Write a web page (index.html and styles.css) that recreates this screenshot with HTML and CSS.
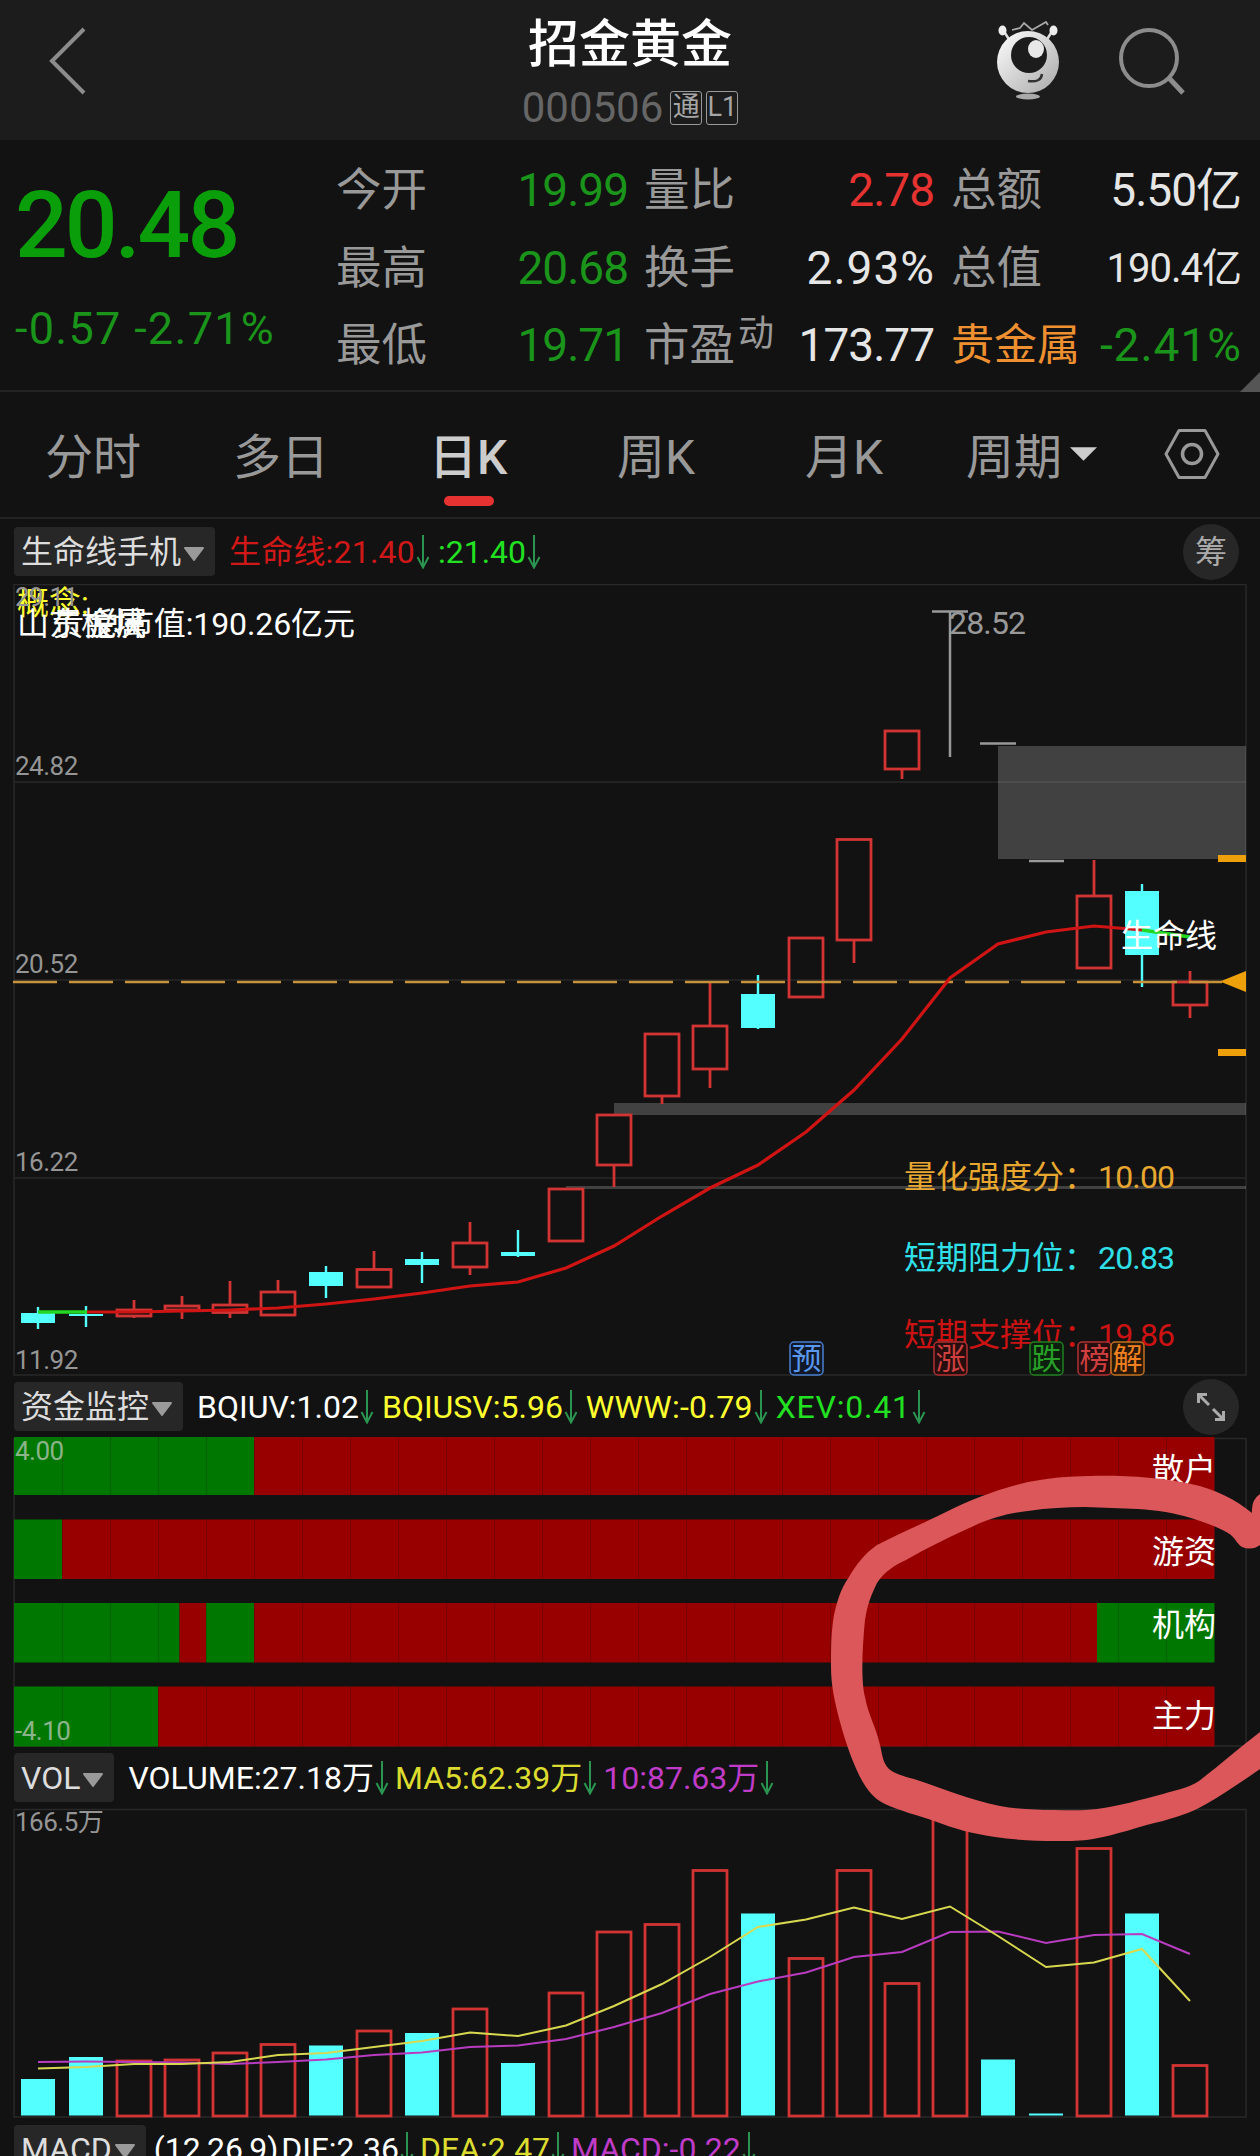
FILE: index.html
```html
<!DOCTYPE html>
<html lang="zh-CN">
<head>
    <meta charset="UTF-8">
    <title>招金黄金 000506</title>
    <link rel="stylesheet" href="styles.css">
</head>
<body>
<svg class="defs">
    <symbol id="down" viewBox="0 0 14 34">
        <path d="M7 0V32M1.500 22L7 32.500L12.500 22" fill="none" stroke="#2a9450" stroke-width="2"/>
    </symbol>
    <symbol id="tri" viewBox="0 0 22 14">
        <path d="M2 1H20L11 13Z" fill="#9a9a9a" stroke="#9a9a9a" stroke-width="2" stroke-linejoin="round"/>
    </symbol>
</svg>
<div id="container">
    <div class="header">
        <svg class="back" viewBox="0 0 40 70"><path d="M36 3L4 35L36 67" fill="none" stroke="#8c8c8c" stroke-width="4"/></svg>
        <div class="title">
            <h1>招金黄金</h1>
            <div class="code"><span>000506</span><i>通</i><i>L1</i></div>
        </div>
        <svg class="robot" viewBox="0 0 64 80">
            <defs>
                <linearGradient id="ball" x1="0" y1="0" x2="1" y2="1">
                    <stop offset="0" stop-color="#fff"/>
                    <stop offset="1" stop-color="#a8a8a8"/>
                </linearGradient>
            </defs>
            <path d="M9 12L14 20M55 12L50 20" stroke="#ddd" stroke-width="2.500"/>
            <path d="M16 9L24 7L28 2L36 9L50 1L52 4" fill="none" stroke="#aaa" stroke-width="1.800"/>
            <ellipse cx="6.500" cy="9.500" rx="4" ry="5" fill="#eee"/>
            <ellipse cx="57.500" cy="9.500" rx="4" ry="5" fill="#eee"/>
            <circle cx="32" cy="41" r="31" fill="url(#ball)"/>
            <circle cx="33" cy="34" r="18" fill="#1c1c1c"/>
            <ellipse cx="40" cy="28" rx="8" ry="9" fill="#e8e8e8"/>
            <path d="M32 60Q45 62 46 53" fill="none" stroke="#333" stroke-width="2.500"/>
            <ellipse cx="32" cy="75.500" rx="12" ry="3" fill="#aaa"/>
        </svg>
        <svg class="search" viewBox="0 0 68 68"><circle cx="30" cy="30" r="28" fill="none" stroke="#8c8c8c" stroke-width="4"/><path d="M50 50L64 65" stroke="#8c8c8c" stroke-width="5"/></svg>
    </div>

    <div class="quote">
        <div class="price">
            <div class="now">20.48</div>
            <div class="change">-0.57 -2.71%</div>
        </div>
        <ul class="col col-1">
            <li><span>今开</span><b class="green">19.99</b></li>
            <li><span>最高</span><b class="green">20.68</b></li>
            <li><span>最低</span><b class="green">19.71</b></li>
        </ul>
        <ul class="col col-2">
            <li><span>量比</span><b class="red">2.78</b></li>
            <li><span>换手</span><b class="wide">2.93%</b></li>
            <li><span>市盈<sup>动</sup></span><b>173.77</b></li>
        </ul>
        <ul class="col col-3">
            <li><span>总额</span><b>5.50亿</b></li>
            <li><span>总值</span><b class="small">190.4亿</b></li>
            <li><span class="orange">贵金属</span><b class="green wide">-2.41%</b></li>
        </ul>
        <div class="corner"></div>
    </div>

    <div class="tabs">
        <span>分时</span>
        <span class="day">多日</span>
        <span class="active">日K</span>
        <span>周K</span>
        <span class="month">月K</span>
        <span>周期<svg class="more" viewBox="0 0 28 14"><path d="M0 0H28L14 14Z" fill="#ccc"/></svg></span>
        <svg class="setting" viewBox="0 0 56 52"><path d="M15 2.500H41L54 26L41 49.500H15L2 26Z" fill="none" stroke="#999" stroke-width="3" stroke-linejoin="round"/><circle cx="28" cy="26" r="9.500" fill="none" stroke="#999" stroke-width="3.500"/></svg>
    </div>

    <div class="bar bar-main">
        <div class="chip">生命线手机<svg><use href="#tri"/></svg></div>
        <div class="item c-red">生命线:21.40<svg><use href="#down"/></svg></div>
        <div class="item c-green">:21.40<svg><use href="#down"/></svg></div>
        <div class="round">筹</div>
    </div>
    <svg class="chart" id="kline" width="1260" height="792" viewBox="0 584 1260 792">
        <path class="frame" d="M14 584.500H1246V1375H14ZM14 782H1246M14 980H1246M14 1178H1246"/>
        <g class="label">
            <text x="17" y="614" fill="#ffff30">概念:</text>
            <text x="17" y="635">山东板块</text>
            <text x="52" y="635">贵金属</text>
            <text x="90" y="635" textLength="265">总市值:190.26亿元</text>
        </g>
        <g class="axis">
            <text x="15" y="606">29.11</text>
            <text x="15" y="775">24.82</text>
            <text x="15" y="973">20.52</text>
            <text x="15" y="1171">16.22</text>
            <text x="15" y="1369">11.92</text>
        </g>
        <!-- 缺口 -->
        <g fill="#fff" fill-opacity="0.2">
            <rect x="998" y="746" width="248" height="113"/>
            <rect x="614" y="1103" width="632" height="12"/>
            <rect x="566" y="1186" width="680" height="3"/>
        </g>
        <g id="candles"></g>
        <g stroke="#999" stroke-width="2.500">
            <path d="M932 611.500H968M950 611V757M980 743.500H1016M1029 861H1064"/>
        </g>
        <text x="949" y="634" textLength="77" class="high">28.52</text>
        <path d="M13 982H1222" stroke="#c8923a" stroke-width="2.500" stroke-dasharray="44 12"/>
        <path d="M1220 981.500L1246 971V992ZM1218 855H1246V862H1218ZM1218 1049H1246V1056H1218Z" fill="#eea00a"/>
        <polyline id="life" fill="none" stroke="#d01414" stroke-width="3.200"/>
        <path d="M38 1312H87M1142 930L1190 937" fill="none" stroke="#22d822" stroke-width="3.500"/>
        <g class="label">
            <text x="1121" y="947">生命线</text>
            <g fill="#e8a830"><text x="904" y="1188">量化强度分：</text><text x="1098" y="1188" textLength="77">10.00</text></g>
            <g fill="#30e0e8"><text x="904" y="1269">短期阻力位：</text><text x="1098" y="1269" textLength="77">20.83</text></g>
            <g fill="#cc1212"><text x="904" y="1346">短期支撑位：</text><text x="1098" y="1346" textLength="77">19.86</text></g>
        </g>
        <g class="mark">
            <g class="blue"><rect x="790" y="1342" width="33" height="33" rx="4"/><text x="791.500" y="1369">预</text></g>
            <g class="rise"><rect x="934" y="1342" width="33" height="33" rx="4"/><text x="935.500" y="1369">涨</text></g>
            <g class="fall"><rect x="1030" y="1342" width="33" height="33" rx="4"/><text x="1031.500" y="1369">跌</text></g>
            <g class="rise"><rect x="1078" y="1342" width="33" height="33" rx="4"/><text x="1079.500" y="1369">榜</text></g>
            <g class="unlock"><rect x="1111" y="1342" width="33" height="33" rx="4"/><text x="1112.500" y="1369">解</text></g>
        </g>
    </svg>

    <div class="bar">
        <div class="chip">资金监控<svg><use href="#tri"/></svg></div>
        <div class="item">BQIUV:1.02<svg><use href="#down"/></svg></div>
        <div class="item c-yellow">BQIUSV:5.96<svg><use href="#down"/></svg></div>
        <div class="item c-yellow www">WWW:-0.79<svg><use href="#down"/></svg></div>
        <div class="item c-green xev">XEV:0.41<svg><use href="#down"/></svg></div>
        <div class="round"><svg viewBox="0 0 28 28"><path d="M1.500 10V1.500H10M2 2L12 12M26.500 18V26.500H18M26 26L16 16" fill="none" stroke="#aaa" stroke-width="3"/></svg></div>
    </div>
    <svg class="chart" width="1260" height="310" viewBox="0 1437 1260 310">
        <path class="frame" d="M14 1438.500H1246V1746H14Z"/>
        <g id="funds"></g>
        <g class="axis light">
            <text x="15" y="1460">4.00</text>
            <text x="15" y="1740">-4.10</text>
        </g>
        <g class="label">
            <text x="1152" y="1481">散户</text>
            <text x="1152" y="1563">游资</text>
            <text x="1152" y="1636">机构</text>
            <text x="1152" y="1727">主力</text>
        </g>
    </svg>

    <div class="bar bar-vol">
        <div class="chip">VOL<svg><use href="#tri"/></svg></div>
        <div class="item">VOLUME:27.18万<svg><use href="#down"/></svg></div>
        <div class="item c-ma5">MA5:62.39万<svg><use href="#down"/></svg></div>
        <div class="item c-ma10">10:87.63万<svg><use href="#down"/></svg></div>
    </div>
    <svg class="chart" width="1260" height="310" viewBox="0 1808 1260 310">
        <path class="frame" d="M14 1809.500H1246V2117H14Z"/>
        <g class="axis"><text x="15" y="1831">166.5万</text></g>
        <g id="volumes"></g>
        <polyline id="ma10" fill="none" stroke="#b83cc0" stroke-width="2"/>
        <polyline id="ma5" fill="none" stroke="#d8d850" stroke-width="2"/>
    </svg>

    <div class="bar bar-macd">
        <div class="chip">MACD<svg><use href="#tri"/></svg></div>
        <div class="item">(12,26,9)<em>DIF:2.36</em><svg><use href="#down"/></svg></div>
        <div class="item c-ma5">DEA:2.47<svg><use href="#down"/></svg></div>
        <div class="item c-ma10">MACD:-0.22<svg><use href="#down"/></svg></div>
    </div>

    <!-- 手绘圈 -->
    <svg class="circle" viewBox="820 1470 440 380">
        <path fill="#db5759" d="M1260 1494Q1251 1500 1252 1513C1235 1499 1215 1489 1191 1484C1160 1477 1120 1475 1089 1476C1068 1476 1048 1478 1028 1482C998 1489 972 1499 946 1512C920 1525 898 1534 877 1545C864 1554 856 1565 849 1577C840 1590 837 1602 834 1615C831 1632 831 1650 831 1667C831 1686 835 1703 840 1722C846 1744 852 1760 859 1775C866 1789 874 1799 885 1804C900 1811 917 1815 934 1821C955 1829 974 1834 995 1837C1015 1840 1036 1841 1057 1841C1072 1841 1080 1841 1093 1839C1117 1835 1140 1826 1163 1821C1180 1816 1195 1811 1208 1803C1225 1793 1243 1781 1260 1769V1732C1238 1749 1220 1765 1199 1781C1188 1788 1176 1790 1163 1794C1140 1800 1119 1806 1097 1809C1082 1811 1068 1810 1053 1810C1035 1810 1017 1809 1000 1806C970 1800 942 1788 914 1779C903 1776 895 1774 889 1769C882 1762 882 1752 880 1745C876 1727 868 1714 865 1697C861 1682 862 1650 865 1620C867 1606 871 1595 877 1583C885 1571 895 1565 906 1560C927 1548 947 1538 967 1529C990 1518 1009 1513 1028 1511C1048 1508 1066 1507 1085 1507C1103 1508 1121 1508 1138 1509C1157 1510 1175 1513 1191 1518C1206 1523 1218 1527 1228 1533C1236 1538 1236 1543 1242 1547Q1252 1551 1260 1545Z"/>
    </svg>
</div>
<script src="script.js"></script>
</body>
</html>
```

FILE: styles.css
```css
*{
    margin: 0;
    padding: 0;
    box-sizing: border-box;
}
body{
    background-color: #121212;
    font-family: Roboto, "Noto Sans CJK SC", sans-serif;
    color: #fff;
}
ul{
    list-style: none;
}
i, em{
    font-style: normal;
}
svg{
    display: block;
    flex: none;
}
.defs{
    width: 0;
    height: 0;
    position: absolute;
}
#container{
    position: relative;
    width: 1260px;
    height: 2156px;
    overflow: hidden;
}
/* 顶部 */
.header{
    display: flex;
    height: 140px;
    background-color: #1c1c1c;
}
.back{
    width: 40px;
    height: 70px;
    margin: 26px 0 0 48px;
}
.title{
    width: 300px;
    margin-left: 392px;
    text-align: center;
}
.title h1{
    height: 85px;
    padding-top: 4px;
    line-height: 82px;
    font-size: 51px;
    font-weight: 500;
}
.code{
    display: flex;
    justify-content: center;
    align-items: center;
    height: 46px;
    color: #666;
    font-size: 42px;
    line-height: 46px;
}
.code span{
    margin-right: 7px;
}
.code i{
    width: 32px;
    height: 34px;
    margin-right: 4px;
    border: 1px solid #999;
    border-radius: 3px;
    color: #a5a5a5;
    font-size: 27px;
    line-height: 31px;
    text-align: center;
}
.code i:last-child{
    margin-right: 0;
}
.robot{
    width: 64px;
    height: 80px;
    margin: 21px 0 0 216px;
}
.search{
    width: 68px;
    height: 68px;
    margin: 28px 0 0 59px;
}
/* 行情 */
.quote{
    position: relative;
    display: flex;
    height: 252px;
    border-bottom: 2px solid #232323;
}
.price{
    width: 336px;
    color: #0a9e0a;
}
.now{
    height: 141px;
    padding: 34px 0 0 15px;
    font-size: 93px;
    font-weight: 500;
    line-height: 104px;
    letter-spacing: -3px;
}
.change{
    padding-left: 15px;
    color: #1a941a;
    font-size: 45px;
    line-height: 96px;
    letter-spacing: 1.3px;
    white-space: nowrap;
}
.col{
    padding-top: 12px;
}
.col-1{
    width: 292px;
}
.col-2{
    width: 290px;
    margin-left: 16px;
}
.col-3{
    width: 290px;
    margin-left: 17px;
}
.col li{
    display: flex;
    justify-content: space-between;
    height: 77.5px;
    line-height: 77px;
    white-space: nowrap;
}
.col span{
    color: #999;
    font-size: 45.5px;
}
.col sup{
    display: inline-block;
    margin-left: 3px;
    font-size: 36px;
    line-height: 36px;
    vertical-align: 15px;
}
.col b{
    color: #e6e6e6;
    font-size: 46px;
    font-weight: 400;
    letter-spacing: -1px;
}
.col b.small{
    font-size: 40px;
}
.col b.wide{
    letter-spacing: 1px;
    margin-right: -1px;
}
.col .green{
    color: #1a941a;
}
.col .red{
    color: #e63331;
}
.col .orange{
    color: #ee9030;
    font-size: 43px;
}
.corner{
    position: absolute;
    right: 0;
    bottom: -2px;
    border-left: 20px solid transparent;
    border-bottom: 20px solid #555;
}
/* 周期切换 */
.tabs{
    display: flex;
    height: 127px;
    padding-left: 45px;
    border-bottom: 2px solid #232323;
    color: #999;
    font-size: 48px;
    line-height: 132px;
}
.tabs span{
    display: flex;
    flex: none;
    width: 188px;
}
.tabs .day{
    width: 196px;
}
.tabs .month{
    width: 161px;
}
.tabs .active{
    position: relative;
    color: #ccc;
    font-weight: 500;
}
.tabs .active:after{
    content: "";
    position: absolute;
    left: 15px;
    bottom: 11px;
    width: 50px;
    height: 10px;
    border-radius: 5px;
    background-color: #e63331;
}
.tabs .more{
    width: 27px;
    height: 14px;
    margin: 55px 0 0 8px;
}
.tabs .setting{
    width: 56px;
    height: 52px;
    margin: 36px 0 0 10px;
}
/* 指标栏 */
.bar{
    display: flex;
    align-items: center;
    height: 61px;
    padding: 0 21px 0 14px;
    font-size: 32px;
    line-height: 52px;
    white-space: nowrap;
}
.bar-main{
    height: 65px;
}
.bar-macd{
    height: 62px;
}
.chip{
    display: flex;
    align-items: center;
    height: 49px;
    padding: 0 10px 0 7px;
    margin-right: 6px;
    border-radius: 4px;
    background-color: #272727;
    color: #ddd;
}
.bar-macd .chip{
    margin-right: 2px;
}
.chip svg{
    width: 22px;
    height: 14px;
    margin: 4px 0 0 2px;
}
.item{
    display: flex;
    align-items: center;
    margin-left: 8px;
}
.bar-vol .c-ma5, .bar-vol .c-ma10, .bar-macd .item{
    margin-left: 6px;
}
.www{
    letter-spacing: 0.3px;
}
.xev{
    letter-spacing: 0.8px;
}
.item svg{
    width: 14px;
    height: 34px;
    margin-left: 1px;
}
.item em{
    margin-left: 3px;
}
.round{
    display: flex;
    align-items: center;
    justify-content: center;
    width: 56px;
    height: 56px;
    margin-left: auto;
    border-radius: 50%;
    background-color: #272727;
    color: #aaa;
    font-size: 32px;
}
.round svg{
    width: 28px;
    height: 28px;
}
.c-red{
    color: #d01818;
    letter-spacing: 0.2px;
}
.c-green{
    color: #22e022;
}
.c-yellow{
    color: #ffff30;
}
.c-ma5{
    color: #dcdc30;
}
.c-ma10{
    color: #c03cc8;
}
/* 图表 */
.frame{
    fill: none;
    stroke: #292929;
    stroke-width: 1.5;
}
.axis{
    fill: #959595;
    font-size: 26px;
    letter-spacing: -0.5px;
}
.light{
    fill: #8cb48c;
}
.label{
    fill: #fff;
    font-size: 32px;
}
.high{
    fill: #999;
    font-size: 32px;
}
.up{
    fill: none;
    stroke: #d23434;
    stroke-width: 2.8;
}
.down{
    fill: #54ffff;
    stroke: none;
}
.line{
    fill: none;
    stroke: #54ffff;
    stroke-width: 2.4;
}
.mark{
    font-size: 30px;
}
.mark rect{
    stroke-width: 1.5;
}
.blue rect{
    fill: #101828;
    stroke: #4a80d0;
}
.blue text{
    fill: #5a98f0;
}
.rise rect{
    fill: #260e0e;
    stroke: #b03030;
}
.rise text{
    fill: #d04040;
}
.fall rect{
    fill: #0c1e0c;
    stroke: #208020;
}
.fall text{
    fill: #28a028;
}
.unlock rect{
    fill: #281808;
    stroke: #c07020;
}
.unlock text{
    fill: #f08020;
}
.circle{
    position: absolute;
    left: 820px;
    top: 1470px;
    width: 440px;
    height: 380px;
}
```

FILE: script.js
```js
var step = 48;
var first = 38;

/* [涨跌, 实体上, 实体下, 最高, 最低] */
var candles = [
    [0, 1313, 1323, 1307, 1329], [0, 1314, 1316, 1306, 1327], [1, 1310, 1316, 1300, 1318],
    [1, 1306, 1310, 1296, 1319], [1, 1305, 1312.5, 1281, 1318], [1, 1292, 1315, 1280, 1315],
    [0, 1272, 1286, 1266, 1298], [1, 1269.5, 1287, 1251, 1288], [0, 1259, 1265, 1252, 1283],
    [1, 1243, 1267, 1222, 1275], [0, 1252, 1256, 1230, 1257], [1, 1189, 1241, 1189, 1241],
    [1, 1115, 1165, 1115, 1187], [1, 1034, 1096, 1034, 1104], [1, 1026, 1069, 982, 1088],
    [0, 994, 1028, 975, 1029], [1, 938, 997, 938, 997], [1, 839.5, 940, 839.5, 963],
    [1, 731, 769, 731, 779], null, null, null,
    [1, 896, 968, 860, 968], [0, 891, 955, 884, 987], [1, 982, 1005, 971, 1018]
];
var life = [1312, 1312, 1311, 1310, 1308, 1304, 1299, 1293, 1286, 1282, 1268, 1246, 1216, 1188,
    1165, 1132, 1090, 1039, 978, 944, 932, 926, 930];
var volumes = [
    [0, 2079], [0, 2057], [1, 2061], [1, 2060], [1, 2053], [1, 2044.5], [0, 2045.5], [1, 2031],
    [0, 2033], [1, 2009], [0, 2063], [1, 1993], [1, 1932], [1, 1924.5], [1, 1870.5], [0, 1913.5],
    [1, 1958.5], [1, 1870.5], [1, 1983.5], [1, 1812], [0, 2059.5], [0, 2113.5], [1, 1848.5],
    [0, 1913.5], [1, 2065.5]
];
var ma5 = [2068.5, 2067, 2064, 2064, 2062, 2055, 2053, 2047, 2041, 2032.5, 2036, 2025.5, 2006,
    1984, 1957, 1927, 1919.5, 1907.5, 1919, 1906.5, 1936, 1967, 1962.5, 1949, 2001];
var ma10 = [2062, 2061.5, 2062, 2062.5, 2064, 2062, 2059.5, 2055, 2052.5, 2047, 2045.5, 2039,
    2027, 2013, 1994, 1981.5, 1972.5, 1957, 1952, 1932, 1931.5, 1943, 1935, 1934, 1954];
/* 资金: 上, 下, [到, 颜色]... */
var funds = [
    [1437, 1495, [[254, "g"], [1214.5, "r"]]],
    [1519.5, 1579, [[62, "g"], [1214.5, "r"]]],
    [1603, 1662.5, [[179.5, "g"], [206, "r"], [254, "g"], [1097, "r"], [1214.5, "g"]]],
    [1686.5, 1746.5, [[158, "g"], [1214.5, "r"]]]
];

/* 一根柱子 */
function body(x, up, top, bottom) {
    return '<rect class="' + (up ? "up" : "down") + '" x="' + (x - 17) + '" y="' + top +
        '" width="34" height="' + (bottom - top) + '"/>';
}

function drawCandles() {
    var html = "";
    for (var i = 0; i < candles.length; i++) {
        var c = candles[i];
        if (!c) {
            continue;
        }
        var x = first + step * i;
        html += '<path class="' + (c[0] ? "up" : "line") + '" d="M' + x + ' ' + c[3] + 'V' + c[1] +
            'M' + x + ' ' + c[2] + 'V' + c[4] + '"/>';
        html += body(x, c[0], c[1], c[2]);
    }
    document.getElementById("candles").innerHTML = html;
}

function drawVolumes() {
    var html = "";
    for (var i = 0; i < volumes.length; i++) {
        html += body(first + step * i, volumes[i][0], volumes[i][1], volumes[i][0] ? 2116 : 2115.5);
    }
    document.getElementById("volumes").innerHTML = html;
}

function drawFunds() {
    var html = "";
    for (var i = 0; i < funds.length; i++) {
        var f = funds[i];
        var x = 14;
        for (var j = 0; j < f[2].length; j++) {
            html += '<rect x="' + x + '" y="' + f[0] + '" width="' + (f[2][j][0] - x) + '" height="' +
                (f[1] - f[0]) + '" fill="' + (f[2][j][1] == "g" ? "#007800" : "#980000") + '"/>';
            x = f[2][j][0];
        }
        for (var k = 62; k < 1200; k += step) {
            html += '<path d="M' + (k + 0.5) + ' ' + f[0] + 'V' + f[1] + '" stroke="#000" stroke-opacity="0.2"/>';
        }
    }
    document.getElementById("funds").innerHTML = html;
}

function drawLine(id, data, start) {
    var points = [];
    for (var i = 0; i < data.length; i++) {
        points.push((start + step * i) + "," + data[i]);
    }
    document.getElementById(id).setAttribute("points", points.join(" "));
}

drawCandles();
drawVolumes();
drawFunds();
drawLine("life", life, first + step);
drawLine("ma5", ma5, first);
drawLine("ma10", ma10, first);
```
